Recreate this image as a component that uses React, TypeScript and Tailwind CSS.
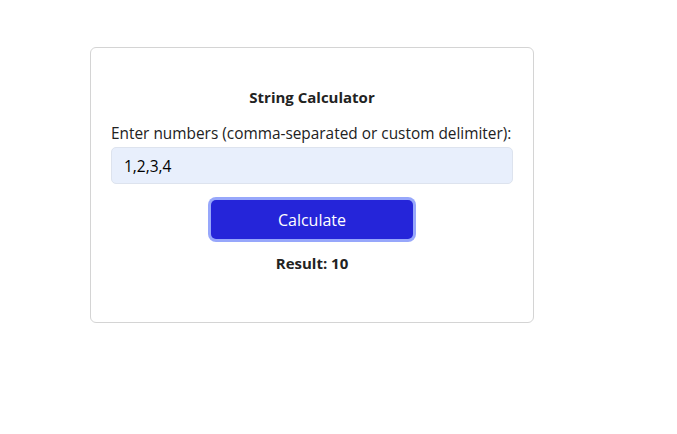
import { useState } from 'react';

export default function App() {
  const [value, setValue] = useState('1,2,3,4');
  const [result, setResult] = useState<number | null>(10);

  function calculate() {
    const nums = value.split(/[,\n;]/).map((n) => parseInt(n, 10)).filter((n) => !isNaN(n));
    setResult(nums.reduce((a, b) => a + b, 0));
  }

  return (
    <div className="min-h-screen bg-white pt-[47px] pl-[90px]" style={{ fontFamily: '"Open Sans", "Noto Sans", sans-serif' }}>
      <div className="w-[444px] h-[276px] border border-[#d4d4d4] rounded-[6px] px-5 pt-[37px] text-[#222]">
        <h2 className="text-center font-bold text-[15px] leading-[24px]">String Calculator</h2>
        <label className="block mt-[13px] whitespace-nowrap text-[15.4px] leading-[24px] text-[#222]">
          Enter numbers (comma-separated or custom delimiter):
        </label>
        <input
          value={value}
          onChange={(e) => setValue(e.target.value)}
          className="block w-full h-[37px] mt-px bg-[#e8effc] border border-[#dde3ee] rounded-[5px] px-3 text-[15.5px] text-black outline-none"
        />
        <div className="flex justify-center mt-[16px]">
          <button
            onClick={calculate}
            className="w-[202px] h-[39px] bg-[#2525d9] text-white text-[16px] rounded-[5px] ring-[3px] ring-[#97a7fb]"
          >
            Calculate
          </button>
        </div>
        {result !== null && (
          <p className="text-center font-bold text-[15px] leading-[24px] mt-[12px]">Result: {result}</p>
        )}
      </div>
    </div>
  );
}
